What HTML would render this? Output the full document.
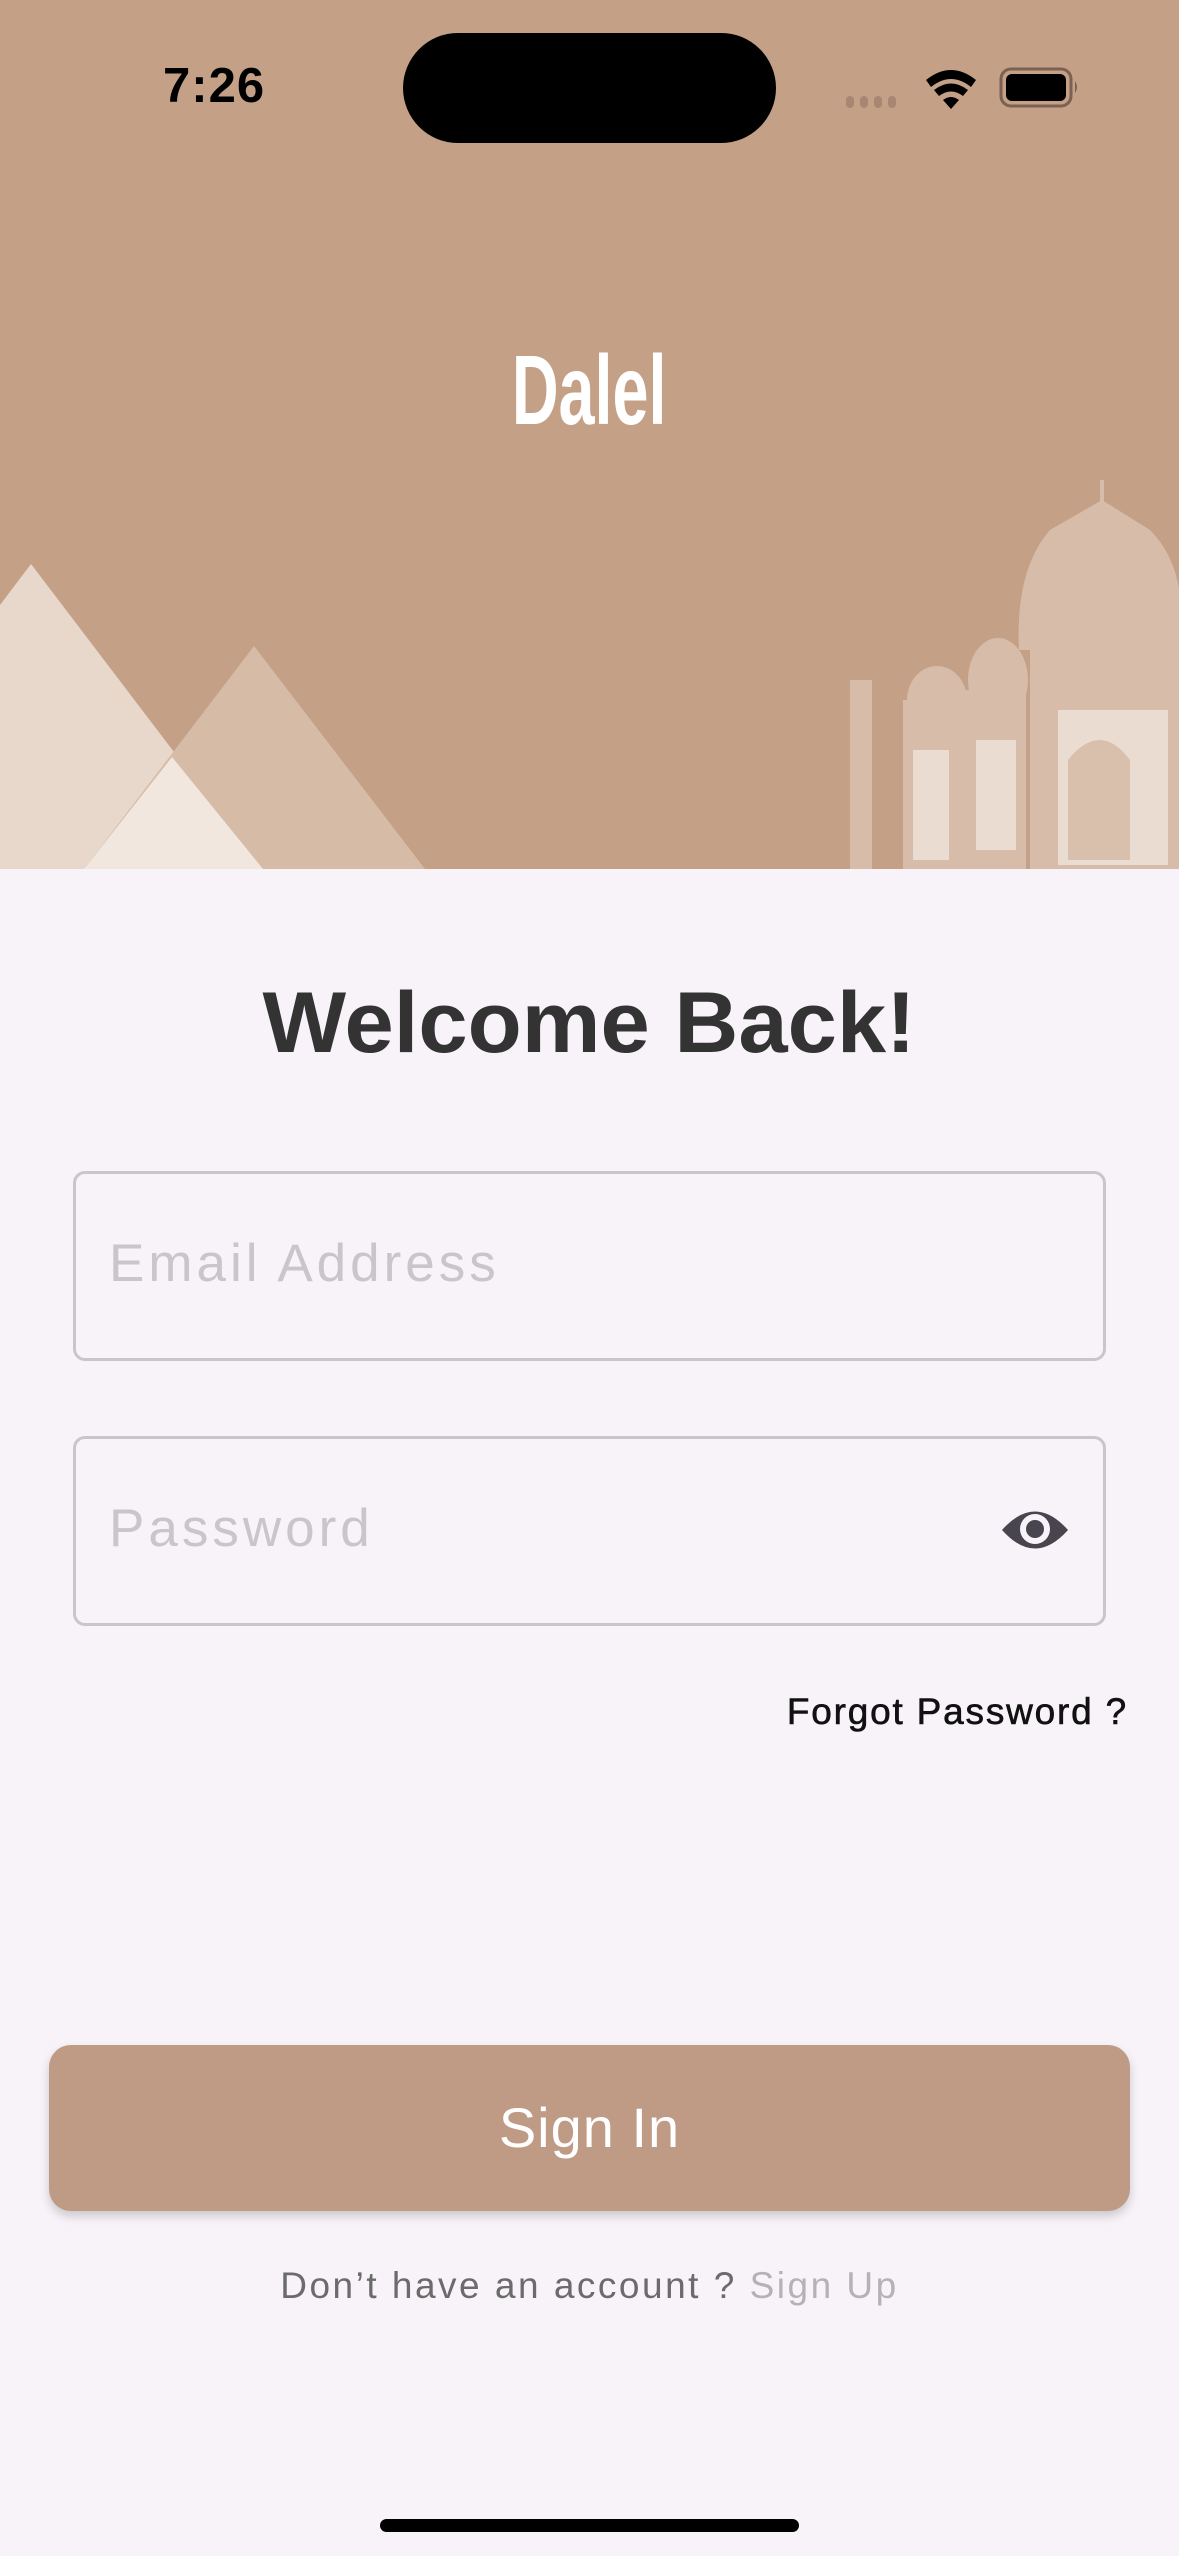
<!DOCTYPE html>
<html><head><meta charset="utf-8">
<style>
*{margin:0;padding:0;box-sizing:border-box}
body{width:1179px;height:2556px;background:#f7f3f8;position:relative;overflow:hidden;font-family:"Liberation Sans",sans-serif}
.abs{position:absolute}
#hdr{left:0;top:0;width:1179px;height:869px;background:#c4a086;overflow:hidden}
.t{white-space:nowrap}
</style></head><body>
<div id="hdr" class="abs">
<svg class="abs" style="left:0;top:0" width="1179" height="869" viewBox="0 0 1179 869">
 <polygon points="31,564 263,869 0,869 0,605" fill="#e8d8cb"/>
 <polygon points="254,646 425,869 84,869" fill="#d6bba7"/>
 <polygon points="172,757 263,869 84,869 " fill="#f1e7de"/>
 <g fill="#d9c0ad" opacity="0.9">
  <rect x="850" y="680" width="22" height="189"/>
  <rect x="903" y="700" width="68" height="169"/>
  <ellipse cx="937" cy="700" rx="30" ry="34"/>
  <rect x="966" y="690" width="60" height="179"/>
  <ellipse cx="998" cy="680" rx="30" ry="42"/>
  <path d="M1019 650 Q1015 570 1050 530 L1102 500 L1150 530 Q1190 570 1179 650 Z"/>
  <rect x="1030" y="645" width="149" height="224"/>
  <rect x="1100" y="480" width="4" height="30"/>
 </g>
 <g fill="#eee2d8" opacity="0.85">
  <rect x="1058" y="710" width="110" height="155"/>
  <rect x="976" y="740" width="40" height="110"/>
  <rect x="913" y="750" width="36" height="110"/>
 </g>
 <g fill="#d9c0ad"><path d="M1068 860 L1068 760 Q1100 720 1130 760 L1130 860 Z"/></g>
</svg>
<div class="abs t" style="left:163px;top:58px;font-size:49px;font-weight:bold;color:#000;letter-spacing:1px">7:26</div>
<div class="abs" style="left:403px;top:33px;width:373px;height:110px;border-radius:55px;background:#000"></div>
<svg class="abs" style="left:840px;top:60px" width="250" height="60" viewBox="0 0 250 60">
 <g fill="#a88672"><rect x="6" y="36" width="8" height="12" rx="4"/><rect x="20" y="36" width="8" height="12" rx="4"/><rect x="34" y="36" width="8" height="12" rx="4"/><rect x="48" y="36" width="8" height="12" rx="4"/></g>
 <path d="M86 20 Q111 0 136 20 L131 27 Q111 11 91 27 Z M94 30 Q111 17 128 30 L123 36 Q111 27 99 36 Z M103 40 Q111 34 119 40 L111 49 Z" fill="#000"/>
 <rect x="161" y="9" width="70" height="37" rx="10" fill="none" stroke="#7b6152" stroke-width="3"/>
 <rect x="166" y="14" width="60" height="27" rx="6" fill="#000"/>
 <path d="M235 21 Q239 27 235 33 Z" fill="#7b6152"/>
</svg>
<div class="abs t" style="left:0;width:1179px;top:335px;text-align:center;color:#fff;font-size:98px;line-height:110px;font-weight:bold"><span style="display:inline-block;transform:scaleX(0.66)">Dalel</span></div>
</div>
<div class="abs t" style="left:0;width:1179px;top:973px;text-align:center;font-size:86px;line-height:100px;color:#333;font-weight:bold"><span style="display:inline-block;transform:scaleX(1.03)">Welcome Back!</span></div>
<div class="abs" style="left:73px;top:1171px;width:1033px;height:190px;border:3px solid #c9c6c9;border-radius:12px"></div>
<div class="abs t" style="left:109px;top:1234px;font-size:53px;line-height:60px;color:#c8c6c8;letter-spacing:4px">Email Address</div>
<div class="abs" style="left:73px;top:1436px;width:1033px;height:190px;border:3px solid #c9c6c9;border-radius:12px"></div>
<div class="abs t" style="left:109px;top:1499px;font-size:53px;line-height:60px;color:#c8c6c8;letter-spacing:4px">Password</div>
<svg class="abs" style="left:1000px;top:1505px" width="70" height="50" viewBox="0 0 70 50">
 <path d="M2 25 Q35 -12 68 25 Q35 62 2 25 Z" fill="#48454f"/>
 <circle cx="35" cy="24" r="15" fill="#f7f3f8"/>
 <circle cx="35" cy="24" r="9" fill="#48454f"/>
</svg>
<div class="abs t" style="right:51px;top:1690px;font-size:37px;line-height:44px;color:#111;letter-spacing:1.8px;-webkit-text-stroke:0.6px #111">Forgot Password ?</div>
<div class="abs" style="left:49px;top:2045px;width:1081px;height:166px;border-radius:22px;background:#bf9a85;box-shadow:0 5px 10px rgba(0,0,0,0.18)"></div>
<div class="abs t" style="left:49px;width:1081px;top:2096px;text-align:center;font-size:56px;line-height:64px;color:#fff;letter-spacing:1px">Sign In</div>
<div class="abs t" style="left:0;width:1179px;top:2264px;text-align:center;font-size:37px;line-height:44px;color:#6b6b6b;letter-spacing:2.5px">Don’t have an account ? <span style="color:#b5b2b5">Sign Up</span></div>
<div class="abs" style="left:380px;top:2519px;width:419px;height:13px;border-radius:7px;background:#000"></div>
</body></html>
